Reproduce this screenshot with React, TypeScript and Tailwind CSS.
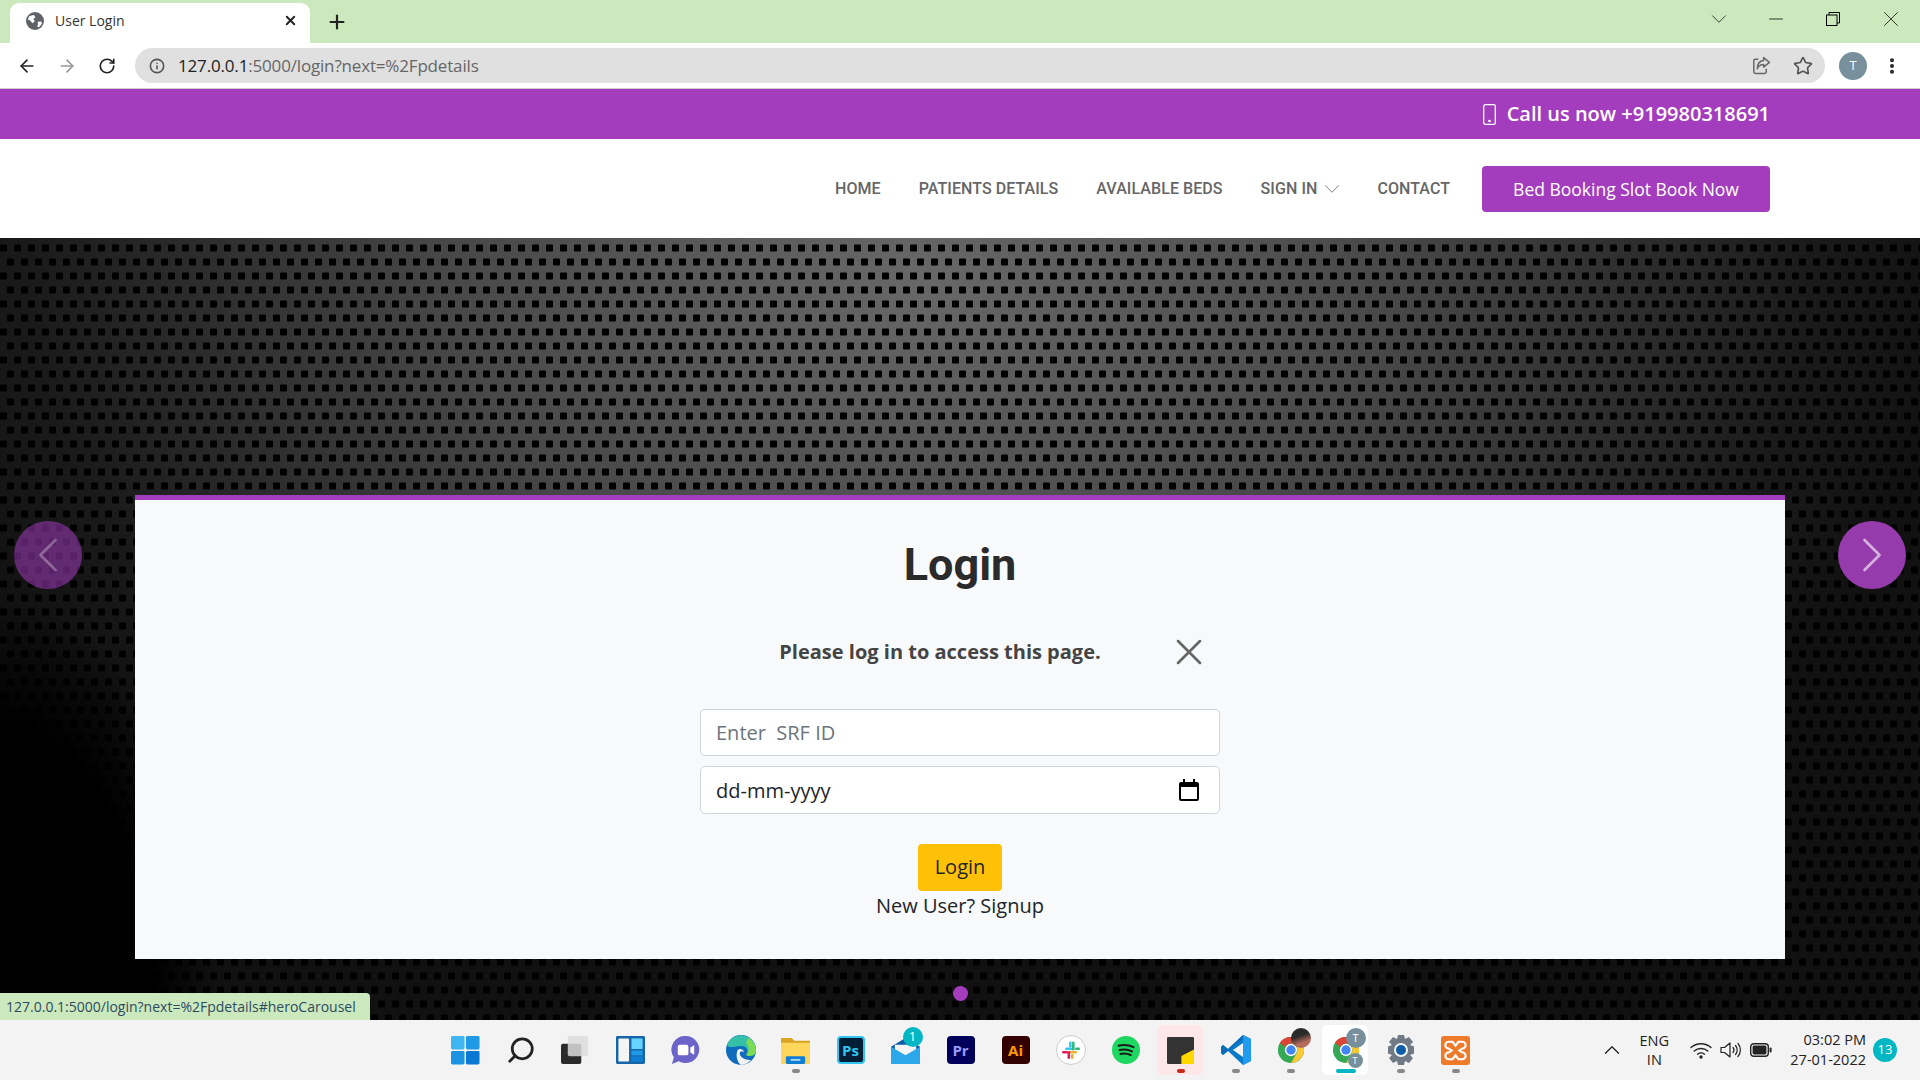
import { ChevronDown, Star, X, ArrowLeft, ArrowRight, RotateCw, Plus, Info, Minus, ChevronUp, Search, MoreVertical, ChevronLeft, ChevronRight } from 'lucide-react';

function BrowserChrome() {
  return (
    <div className="shrink-0 font-['Open_Sans',sans-serif]">
      {/* Tab strip */}
      <div className="flex h-[43px] items-end bg-[#cce9be]">
        <div className="ml-[10px] flex h-[40px] w-[300px] items-center rounded-t-[9px] bg-white pb-[5px] pl-[16px] pr-[12px]">
          <svg viewBox="0 0 16 16" className="h-[18px] w-[18px]">
            <circle cx="8" cy="8" r="8" fill="#5f6368" />
            <path d="M3 3.5 7 2.6 8.4 4.6 6.6 6.2 7.8 8.2 5.8 10 3.4 7.4 1.6 6.6ZM10.4 8.6 13.6 8.4 14.2 10.4 11.6 13.6 10 13.2 10.6 11Z" fill="#fff" />
          </svg>
          <span className="ml-[11px] text-[14px] text-[#333]">User Login</span>
          <X className="ml-auto h-[15px] w-[15px] text-[#222]" strokeWidth={3} />
        </div>
        <Plus className="mb-[10px] ml-[16px] h-[22px] w-[22px] text-[#222]" strokeWidth={2.4} />
        <div className="ml-auto mb-[11px] flex items-center">
          <ChevronDown className="h-[26px] w-[26px] text-[#222]" strokeWidth={0.8} />
          <Minus className="ml-[33px] h-[22px] w-[22px] text-[#222]" strokeWidth={1} />
          <svg viewBox="0 0 14 14" className="ml-[39px] h-[14px] w-[14px] text-black" fill="none" stroke="currentColor">
            <rect x="0.5" y="3" width="10.5" height="10.5" />
            <path d="M3 3V.5H13.5V11H11" />
          </svg>
          <X className="ml-[38px] mr-[16px] h-[26px] w-[26px] text-[#222]" strokeWidth={0.8} />
        </div>
      </div>

      {/* Toolbar */}
      <div className="flex h-[46px] items-center border-b border-[#ccc] bg-white">
        <ArrowLeft className="ml-[17px] h-[20px] w-[20px] text-[#222]" strokeWidth={2} />
        <ArrowRight className="ml-[20px] h-[20px] w-[20px] text-[#999]" strokeWidth={2} />
        <RotateCw className="ml-[21px] h-[18px] w-[18px] text-[#222]" strokeWidth={2.2} />
        <div className="ml-[19px] flex h-[35px] w-[1690px] items-center rounded-full bg-[#e0e0e0] pl-[14px] pr-[12px]">
          <Info className="h-[16px] w-[16px] text-[#555]" strokeWidth={2.4} />
          <span className="ml-[13px] text-[17px] tracking-[-0.17px] text-[#666]">
            <span className="text-[#222]">127.0.0.1</span>:5000/login?next=%2Fpdetails
          </span>
          <svg viewBox="0 0 18 18" className="ml-auto h-[19px] w-[19px] text-[#666]" fill="none" stroke="currentColor" strokeWidth="1.4">
            <path d="M6 3H3.2A1.5 1.5 0 0 0 1.7 4.5V15A1.5 1.5 0 0 0 3.2 16.5H12A1.5 1.5 0 0 0 13.5 15V12" />
            <path d="M11 1.5 16.5 6 11 10.5V8C8 8 6 9.4 5 12 5 7.5 7.2 4.6 11 4.2Z" strokeLinejoin="round" />
          </svg>
          <Star className="ml-[22px] h-[20px] w-[20px] text-[#555]" strokeWidth={2} />
        </div>
        <div className="ml-[14px] flex h-[28px] w-[28px] items-center justify-center rounded-full bg-[#78909c] text-[13px] text-white">T</div>
        <MoreVertical className="ml-[15px] h-[20px] w-[20px] text-[#222]" strokeWidth={2.8} />
      </div>
    </div>
  );
}

function SiteHeader() {
  const links = ['HOME', 'PATIENTS DETAILS', 'AVAILABLE BEDS'];
  return (
    <>
      {/* Top bar */}
      <div className="flex h-[50px] shrink-0 items-center justify-end bg-[#a33dbd] pr-[150px] font-['Open_Sans',sans-serif] text-white">
        <svg viewBox="0 0 13 21" className="h-[21px] w-[13px]" fill="none" stroke="currentColor" strokeWidth="1.3">
          <rect x="0.7" y="0.7" width="11.6" height="19.6" rx="1.6" />
          <circle cx="6.5" cy="17" r="0.7" fill="currentColor" />
        </svg>
        <span className="ml-[11px] text-[20px] font-semibold leading-none">Call us now +919980318691</span>
      </div>

      {/* Nav */}
      <div className="z-10 flex h-[99px] shrink-0 items-center justify-end bg-white pr-[150px]">
        <nav className="flex items-center gap-[38px] font-['Roboto',sans-serif] text-[16px] font-medium tracking-[0.07px] text-[#666]">
          {links.map((link) => (
            <a key={link}>{link}</a>
          ))}
          <a className="mr-[-6px] flex items-center gap-[2px]">
            SIGN IN
            <ChevronDown className="h-[26px] w-[26px]" strokeWidth={0.8} />
          </a>
          <a>CONTACT</a>
        </nav>
        <button className="ml-[32px] h-[46px] w-[288px] rounded-[4px] bg-[#a33dbd] pt-[1px] font-['Open_Sans',sans-serif] text-[17.5px] text-white">
          Bed Booking Slot Book Now
        </button>
      </div>
    </>
  );
}

function LoginCard() {
  return (
    <div className="relative mx-auto mt-[257px] flex h-[464px] w-[1650px] flex-col items-center border-t-[5px] border-[#a33dbd] bg-[#f8f9fa] font-['Open_Sans',sans-serif]">
      <h1 className="mt-[39px] font-['Roboto',sans-serif] text-[45px] font-bold leading-[52px] text-[#2b2b2b]">Login</h1>

      {/* Flash message */}
      <div className="relative mt-[46px] h-[30px] w-[520px] pr-[40px] text-center text-[20px] font-bold leading-[30px] text-[#444]">
        Please log in to access this page.
        <X className="absolute right-[9px] top-[-7px] h-[44px] w-[44px] text-[#666]" strokeWidth={1.4} />
      </div>

      <input
        placeholder={'Enter\u00a0 SRF ID'}
        className="mt-[42px] h-[47px] w-[520px] rounded-[5px] border border-[#ced4da] bg-white px-[15px] pb-[1px] text-[20px] text-[#212529] placeholder:text-[#6c757d]"
      />
      <div className="relative mt-[10px] h-[48px] w-[520px]">
        <input
          readOnly
          value="dd-mm-yyyy"
          className="h-full w-full rounded-[5px] border border-[#ced4da] bg-white px-[15px] text-[20px] text-[#212529]"
        />
        <svg viewBox="0 0 20 22" className="absolute right-[21px] top-[13px] h-[22px] w-[20px]">
          <path d="M4 0h2v3h8V0h2v3h2a2 2 0 0 1 2 2v15a2 2 0 0 1-2 2H2a2 2 0 0 1-2-2V5a2 2 0 0 1 2-2h2Z M2 8v12h16V8Z" fill="#000" fillRule="evenodd" />
        </svg>
      </div>

      <button className="mt-[30px] h-[47px] w-[84px] rounded-[4px] bg-[#ffc107] pb-[1px] text-[20px] text-[#212529]">Login</button>
      <a className="text-[20px] leading-[30px] text-[#212529]">New User? Signup</a>
    </div>
  );
}

function Hero() {
  return (
    <div className="relative flex-1 overflow-hidden bg-[radial-gradient(ellipse_1050px_680px_at_48%_40px,#686868_0%,#484848_45%,#1a1a1a_85%,#111111_100%)]">
      <svg className="absolute inset-0 h-full w-full" aria-hidden="true">
        <defs>
          <pattern id="holes" x="0" y="0" width="14" height="28" patternUnits="userSpaceOnUse">
            <rect x="0" y="6.5" width="7" height="7" rx="1" fill="#000" />
            <rect x="7" y="20.5" width="7" height="7" rx="1" fill="#000" />
          </pattern>
        </defs>
        <rect width="100%" height="100%" fill="url(#holes)" />
      </svg>
      <div className="absolute bottom-0 left-0 h-[440px] w-[260px] bg-[radial-gradient(ellipse_220px_420px_at_0%_100%,#000_70%,transparent_100%)]" />

      <div className="relative">
        <LoginCard />
      </div>

      {/* Carousel controls */}
      <div className="absolute left-[14px] top-[283px] flex h-[68px] w-[68px] items-center justify-center rounded-full bg-[#a33dbd]/55">
        <ChevronLeft className="h-[60px] w-[60px] text-white/30" strokeWidth={1.1} />
      </div>
      <div className="absolute left-[1838px] top-[283px] flex h-[68px] w-[68px] items-center justify-center rounded-full bg-[#953bab]">
        <ChevronRight className="h-[60px] w-[60px] text-white/60" strokeWidth={1.1} />
      </div>
      <div className="absolute left-[953px] top-[748px] h-[15px] w-[15px] rounded-full bg-[#a33dbd]" />

      {/* Link status bubble */}
      <div className="absolute bottom-0 left-0 flex h-[27px] w-[370px] items-center rounded-tr-[4px] bg-[#cce9be] pl-[6px] font-['Open_Sans',sans-serif] text-[14px] text-[#2d4a5e]">
        127.0.0.1:5000/login?next=%2Fpdetails#heroCarousel
      </div>
    </div>
  );
}

function Cell({ children, dot, tint }: { children: React.ReactNode; dot?: string; tint?: string }) {
  return (
    <div className="relative flex h-[50px] w-[55px] items-center justify-center">
      {tint && <div className={`absolute inset-y-0 left-[4px] right-[5px] rounded-[5px] ${tint}`} />}
      <div className="relative flex h-[30px] w-[30px] items-center justify-center">{children}</div>
      {dot && <div className={`absolute bottom-[2px] left-1/2 h-[4px] -translate-x-1/2 rounded-full ${dot}`} />}
    </div>
  );
}

function AdobeIcon({ label, bg, color }: { label: string; bg: string; color: string }) {
  return (
    <div className={`flex h-[28px] w-[28px] items-center justify-center rounded-[4px] font-['Open_Sans',sans-serif] text-[15px] font-bold ${bg} ${color}`}>
      {label}
    </div>
  );
}

function ChromeIcon() {
  return (
    <svg viewBox="0 0 30 30" className="h-[28px] w-[28px]">
      <circle cx="15" cy="15" r="14" fill="#34a853" />
      <path d="M15 1A14 14 0 0 1 27.1 8H15A7 7 0 0 0 8.8 11.8L3 7.2A14 14 0 0 1 15 1Z" fill="#db4437" />
      <path d="M27.1 8A14 14 0 0 1 15 29L21 18.5A7 7 0 0 0 21 12Z" fill="#fcc934" />
      <circle cx="15" cy="15" r="6.6" fill="#fff" />
      <circle cx="15" cy="15" r="5" fill="#4285f4" />
    </svg>
  );
}

function Taskbar() {
  return (
    <div className="grid h-[60px] shrink-0 grid-cols-[1fr_auto_1fr] items-center bg-[#f3f3f3] font-['Open_Sans',sans-serif]">
      <div />
      <div className="ml-[1px] flex items-center">
        {/* Start */}
        <Cell>
          <svg viewBox="0 0 30 30" className="h-[29px] w-[29px]">
            <rect x="0" y="0" width="14" height="14" rx="1.5" fill="#3fb6f2" />
            <rect x="15.5" y="0" width="14" height="14" rx="1.5" fill="#1f9ae6" />
            <rect x="0" y="15.5" width="14" height="14" rx="1.5" fill="#1a93e2" />
            <rect x="15.5" y="15.5" width="14" height="14" rx="1.5" fill="#0a78d4" />
          </svg>
        </Cell>
        <Cell>
          <Search className="h-[30px] w-[30px] -scale-x-100 text-[#222]" strokeWidth={2.2} />
        </Cell>
        {/* Task view */}
        <Cell>
          <svg viewBox="0 0 30 30" className="h-[29px] w-[29px]">
            <rect x="0" y="8" width="21" height="21" rx="2" fill="#2a2a2a" />
            <rect x="7" y="0" width="21" height="21" rx="2" fill="#dcdcdc" fillOpacity="0.85" />
          </svg>
        </Cell>
        {/* Widgets */}
        <Cell>
          <svg viewBox="0 0 30 30" className="h-[29px] w-[29px]">
            <rect width="30" height="29" rx="1.5" fill="#1565a8" />
            <rect x="2.5" y="2.5" width="11" height="24" rx="1" fill="#f4f4f4" />
            <rect x="16" y="2.5" width="11.5" height="11" fill="#65d2ff" />
            <rect x="16" y="15" width="11.5" height="5" fill="#1e9be8" />
            <rect x="16" y="21" width="11.5" height="5.5" fill="#0f7fd6" />
          </svg>
        </Cell>
        {/* Chat */}
        <Cell>
          <svg viewBox="0 0 30 30" className="h-[29px] w-[29px]">
            <path d="M15 0a14 14 0 1 1-7 26L1 29l2-7A14 14 0 0 1 15 0Z" fill="#6c64c8" />
            <rect x="7" y="9" width="11" height="11" rx="2" fill="#fff" />
            <path d="M20 12l4-2.5v10L20 17Z" fill="#fff" />
          </svg>
        </Cell>
        {/* Edge */}
        <Cell>
          <svg viewBox="0 0 30 30" className="h-[30px] w-[30px]">
            <circle cx="15" cy="15" r="15" fill="#0f6cbd" />
            <path d="M1 10A15 15 0 0 1 30 15C30 21 24 22 20 20 23 17 22 11 15 11 8 11 4 14 1 10Z" fill="#35c1a8" />
            <path d="M22 3A15 15 0 0 1 30 15C30 21 24 22 20 20 23 17 24 12 20 8Z" fill="#7ddc54" />
            <path d="M11 17C11 13 17 13 18 17 15 15 13 17 14 20 16 24 21 25 25 25A15 15 0 0 1 15 30C11 27 10 21 11 17Z" fill="#f3f3f3" />
          </svg>
        </Cell>
        {/* Files */}
        <Cell dot="w-[8px] bg-[#888]">
          <svg viewBox="0 0 30 30" className="h-[29px] w-[29px]">
            <path d="M0 2h11l3 3h16v24H0Z" fill="#d9a520" />
            <rect x="0" y="7" width="30" height="22" fill="#ffd65c" />
            <rect x="5" y="21" width="20" height="8" rx="1.5" fill="#0f7fd6" />
            <rect x="10" y="24" width="10" height="1.5" fill="#d7ecfb" />
          </svg>
        </Cell>
        <Cell>
          <AdobeIcon label="Ps" bg="bg-[#001e36] border-2 border-[#31c5f0]" color="text-[#31c5f0]" />
        </Cell>
        {/* Mail */}
        <Cell>
          <svg viewBox="0 0 30 30" className="h-[29px] w-[29px]">
            <path d="M0 11 15 2 30 11V29H0Z" fill="#0f5ca8" />
            <path d="M4 9H26V19L15 25 4 19Z" fill="#f4f4f4" />
            <path d="M0 11 15 20 30 11V29H0Z" fill="#2ba7ea" />
          </svg>
          <div className="absolute -right-[2px] -top-[8px] flex h-[20px] w-[20px] items-center justify-center rounded-full bg-[#00b7c3] text-[13px] text-white">1</div>
        </Cell>
        <Cell>
          <AdobeIcon label="Pr" bg="bg-[#00005b]" color="text-[#9a9aff]" />
        </Cell>
        <Cell>
          <AdobeIcon label="Ai" bg="bg-[#330000]" color="text-[#ff9a00]" />
        </Cell>
        {/* Slack */}
        <Cell>
          <svg viewBox="0 0 30 30" className="h-[30px] w-[30px]">
            <circle cx="15" cy="15" r="14.5" fill="#fff" stroke="#ccc" />
            <rect x="9" y="12.5" width="9" height="2.6" rx="1.3" fill="#36c5f0" />
            <rect x="13" y="6.5" width="2.6" height="6" rx="1.3" fill="#36c5f0" />
            <rect x="16" y="6.5" width="2.6" height="9" rx="1.3" fill="#2eb67d" />
            <rect x="19" y="12.5" width="5" height="2.6" rx="1.3" fill="#2eb67d" />
            <rect x="12" y="16" width="9" height="2.6" rx="1.3" fill="#ecb22e" />
            <rect x="15" y="19" width="2.6" height="5" rx="1.3" fill="#ecb22e" />
            <rect x="11.5" y="16" width="2.6" height="8" rx="1.3" fill="#e01e5a" />
            <rect x="6" y="16" width="6" height="2.6" rx="1.3" fill="#e01e5a" />
          </svg>
        </Cell>
        {/* Spotify */}
        <Cell>
          <svg viewBox="0 0 30 30" className="h-[28px] w-[28px]">
            <circle cx="15" cy="15" r="15" fill="#1ed760" />
            <path d="M7 10.5c6-1.6 11-1 16 1.5M8 15c5-1.2 9-.8 13.5 1.4M9 19.2c4-.8 7.5-.5 11 1.2" fill="none" stroke="#1a1a1a" strokeWidth="2.2" strokeLinecap="round" />
          </svg>
        </Cell>
        {/* Sticky notes */}
        <Cell dot="w-[8px] bg-[#c42b1c]" tint="bg-[#fde7e9]">
          <svg viewBox="0 0 30 30" className="h-[27px] w-[27px]">
            <rect width="30" height="30" rx="1.5" fill="#333" />
            <path d="M16 30V21L30 14V30Z" fill="#ffd800" />
          </svg>
        </Cell>
        {/* VS Code */}
        <Cell dot="w-[8px] bg-[#888]">
          <svg viewBox="0 0 30 30" className="h-[30px] w-[30px]">
            <path d="M22 0 30 4V26L22 30 7 16 2 20 0 18V12L2 10 7 14Z" fill="#0a7bcb" />
            <path d="M0 18 2 20 22 4V0L7 14 2 10 0 12Z" fill="#0a6fb8" />
            <path d="M22 0 30 4V26L22 30Z" fill="#1f9cf0" />
            <path d="M22 8 12 15 22 22Z" fill="#f3f3f3" />
          </svg>
        </Cell>
        {/* Chrome, profile one */}
        <Cell dot="w-[8px] bg-[#888]">
          <ChromeIcon />
          <div className="absolute -right-[5px] -top-[7px] h-[20px] w-[20px] rounded-full bg-[linear-gradient(160deg,#2a2a2a_40%,#b46a5c_70%)]" />
        </Cell>
        {/* Chrome, active */}
        <Cell dot="w-[20px] bg-[#00b7c3]" tint="bg-white">
          <ChromeIcon />
          <div className="absolute -right-[5px] -top-[7px] flex h-[20px] w-[20px] items-center justify-center rounded-full bg-[#78909c] text-[11px] text-white">T</div>
          <div className="absolute -bottom-[3px] -right-[2px] flex h-[15px] w-[15px] items-center justify-center rounded-full bg-[#78909c] text-[9px] text-white">T</div>
        </Cell>
        {/* Settings */}
        <Cell dot="w-[8px] bg-[#888]">
          <svg viewBox="0 0 30 30" className="h-[30px] w-[30px]">
            <path d="M12 0h6l1 4 4-2 4 5-3 3 4 1.5v7L24 20l3 3-4 5-4-2-1 4h-6l-1-4-4 2-4-5 3-3-4-1.5v-7L6 10 3 7l4-5 4 2Z" fill="#6f7a85" />
            <circle cx="15" cy="15" r="7" fill="#f3f3f3" />
            <circle cx="15" cy="15" r="5" fill="#0f5ca8" />
          </svg>
        </Cell>
        {/* XAMPP */}
        <Cell dot="w-[8px] bg-[#888]">
          <svg viewBox="0 0 30 30" className="h-[29px] w-[29px]">
            <rect width="30" height="30" rx="3" fill="#ef7a2a" />
            <path d="M8 6h4l3 4 3-4h4a3 3 0 0 1 0 7l-3 2 3 2a3 3 0 0 1 0 7h-4l-3-4-3 4H8a3 3 0 0 1 0-7l3-2-3-2a3 3 0 0 1 0-7Z" fill="none" stroke="#fff" strokeWidth="2.2" />
          </svg>
        </Cell>
      </div>

      {/* System tray */}
      <div className="flex items-center justify-end text-[#222]">
        <ChevronUp className="h-[26px] w-[26px]" strokeWidth={1.2} />
        <div className="ml-[9px] w-[40px] text-center text-[14.5px] leading-[19px]">
          ENG
          <br />
          IN
        </div>
        <svg viewBox="0 0 22 18" className="ml-[16px] h-[18px] w-[22px]" fill="none" stroke="currentColor" strokeWidth="1.4" strokeLinecap="round">
          <path d="M1 6.5C6.5 1.5 15.5 1.5 21 6.5" />
          <path d="M4.2 10C8 6.6 14 6.6 17.8 10" />
          <path d="M7.5 13.2C9.6 11.6 12.4 11.6 14.5 13.2" />
          <circle cx="11" cy="16" r="1" fill="currentColor" />
        </svg>
        <svg viewBox="0 0 22 18" className="ml-[8px] h-[18px] w-[22px]" fill="none" stroke="currentColor" strokeWidth="1.2" strokeLinejoin="round" strokeLinecap="round">
          <path d="M1 6.5H4.5L10 2V16L4.5 11.5H1Z" />
          <path d="M13 6.5C14.3 8 14.3 10 13 11.5" />
          <path d="M15.5 4.5C17.8 7 17.8 11 15.5 13.5" />
          <path d="M18 2.5C21.2 6 21.2 12 18 15.5" />
        </svg>
        <svg viewBox="0 0 22 14" className="ml-[8px] h-[14px] w-[22px]">
          <rect x="0.7" y="0.7" width="17.6" height="12.6" rx="3" fill="none" stroke="currentColor" strokeWidth="1.4" />
          <rect x="2.6" y="2.6" width="13.8" height="8.8" rx="1.4" fill="currentColor" />
          <rect x="19.6" y="4.5" width="2" height="5" rx="1" fill="currentColor" />
        </svg>
        <div className="ml-[18px] text-right text-[14.5px] leading-[20px]">
          03:02 PM
          <br />
          27-01-2022
        </div>
        <div className="ml-[7px] mr-[23px] flex h-[24px] w-[24px] items-center justify-center rounded-full bg-[#00b7c3] text-[13px] text-white">13</div>
      </div>
    </div>
  );
}

export default function App() {
  return (
    <div className="flex h-screen w-full flex-col overflow-hidden bg-black">
      <BrowserChrome />
      <SiteHeader />
      <Hero />
      <Taskbar />
    </div>
  );
}
